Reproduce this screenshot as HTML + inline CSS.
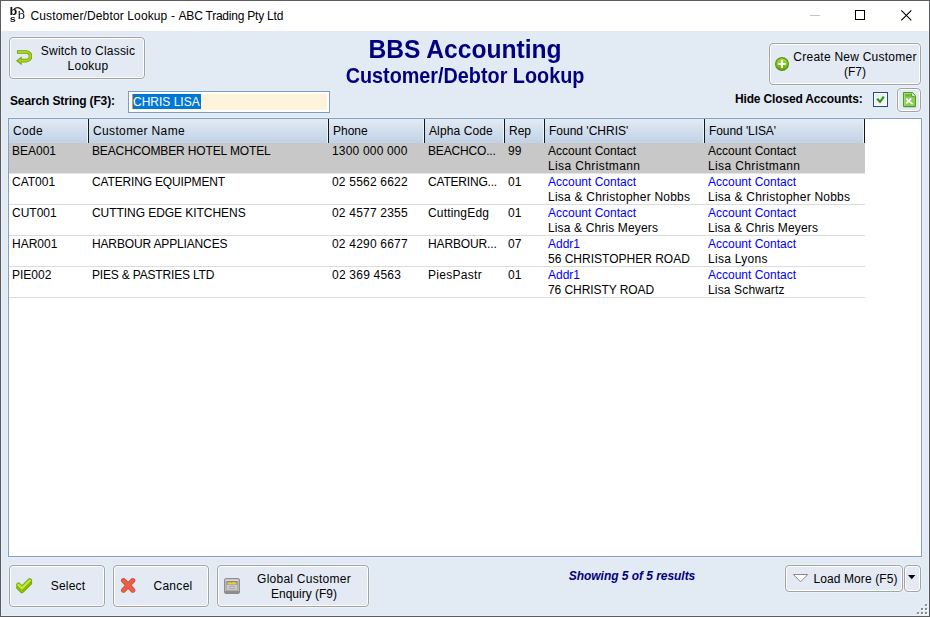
<!DOCTYPE html>
<html><head><meta charset="utf-8"><title>Customer/Debtor Lookup - ABC Trading Pty Ltd</title>
<style>
html,body{margin:0;padding:0;}
body{width:930px;height:617px;overflow:hidden;background:#e2eaf4;font-family:"Liberation Sans",sans-serif;font-size:12px;color:#000;position:relative;}
.abs{position:absolute;}
#win{position:absolute;left:0;top:0;width:928px;height:615px;border:1px solid #5a5c60;border-top-color:#5e5e5e;background:#e2eaf4;box-shadow:inset 0 0 0 1px #e9f0fa;}
#titlebar{position:absolute;left:1px;top:1px;width:928px;height:30px;background:#fff;}
#title{position:absolute;left:30.5px;top:9px;font-size:12px;white-space:nowrap;color:#000;}
.btn{position:absolute;box-sizing:border-box;border:1px solid #a3a3a3;border-radius:4px;background:#e3eaf4;box-shadow:inset 0 0 0 1px #fff,0 0 0 1px rgba(240,246,253,.6);text-align:center;font-size:12px;line-height:15px;color:#000;}
h1,h2{margin:0;position:absolute;left:0;width:930px;text-align:center;color:#000080;font-weight:bold;white-space:nowrap;}
h1{top:35px;font-size:25px;line-height:28px;transform:scaleX(.984);}
h2{top:65px;font-size:21.5px;line-height:22px;transform:scaleX(.921);}
#grid{position:absolute;left:8px;top:118px;width:912px;height:437px;border:1px solid #83a1c1;background:#fff;box-sizing:content-box;box-shadow:0 0 0 1px #e8eff7;}
.hd{position:absolute;top:0;height:24px;box-sizing:border-box;border-right:1px solid #101820;background:linear-gradient(#e3eaf4,#c1d2e6);box-shadow:inset -1px 0 0 #eef3f9;font-size:12px;line-height:24px;padding-left:4px;white-space:nowrap;}
.row{position:absolute;left:0;width:856px;height:31px;border-bottom:1px solid #dcdcdc;box-sizing:border-box;}
.row.sel{background:#c8c8c8;border-bottom-color:#e4e4e4;}
.c{position:absolute;top:1px;font-size:12px;line-height:15px;white-space:nowrap;}
.lnk{color:#0000ff;}
</style></head><body>
<div id="win"></div>
<div id="titlebar"></div>
<div id="title"><span style="letter-spacing:0.13px">Customer/Debtor Lookup</span><span style="letter-spacing:0.15px"> - </span><span style="letter-spacing:-0.22px">ABC Trading Pty Ltd</span></div>

<h1>BBS Accounting</h1>
<h2>Customer/Debtor Lookup</h2>

<div class="btn" style="left:9px;top:37px;width:136px;height:42px;padding:6px 0 0 22px;"><span style="letter-spacing:0.22px">Switch to Classic</span><br><span style="letter-spacing:0.25px">Lookup</span></div>
<div class="btn" style="left:769px;top:43px;width:152px;height:42px;padding:6px 0 0 20px;"><span style="letter-spacing:0.24px">Create New Customer</span><br>(F7)</div>

<div class="abs" style="left:10px;top:94px;font-weight:bold;font-size:12px;letter-spacing:-0.13px;">Search String (F3):</div>
<div class="abs" style="left:128px;top:91px;width:200px;height:20px;border:1px solid #7f9dbe;background:#fff;"><div class="abs" style="left:3px;top:2px;width:195px;height:16px;background:#fff3dc;"></div><span style="position:absolute;left:3px;top:2px;height:15px;border-left:1px solid #ff8a2a;padding-right:1px;background:#0078d7;color:#fff;font-size:12px;line-height:16px;white-space:nowrap;">CHRIS LISA</span></div>
<div class="abs" style="left:735px;top:92px;font-weight:bold;font-size:12px;letter-spacing:-0.16px;">Hide Closed Accounts:</div>

<div id="grid">
<div class="hd" style="left:0px;width:80px;"><span style="letter-spacing:0.33px">Code</span></div>
<div class="hd" style="left:80px;width:240px;"><span style="letter-spacing:0.36px">Customer Name</span></div>
<div class="hd" style="left:320px;width:96px;">Phone</div>
<div class="hd" style="left:416px;width:80px;"><span style="letter-spacing:0.11px">Alpha Code</span></div>
<div class="hd" style="left:496px;width:40px;">Rep</div>
<div class="hd" style="left:536px;width:160px;">Found 'CHRIS'</div>
<div class="hd" style="left:696px;width:160px;"><span style="letter-spacing:-0.08px">Found 'LISA'</span></div>
<div class="row sel" style="top:24px;">
<div class="c" style="left:3px;">BEA001</div>
<div class="c" style="left:83px;"><span style="letter-spacing:-0.13px">BEACHCOMBER HOTEL MOTEL</span></div>
<div class="c" style="left:323px;"><span style="letter-spacing:0.18px">1300 000 000</span></div>
<div class="c" style="left:419px;"><span style="letter-spacing:-0.17px">BEACHCO...</span></div>
<div class="c" style="left:499px;">99</div>
<div class="c" style="left:539px;"><span class="">Account Contact</span><br><span style="letter-spacing:0.38px">Lisa Christmann</span></div>
<div class="c" style="left:699px;"><span class="">Account Contact</span><br><span style="letter-spacing:0.38px">Lisa Christmann</span></div>
</div>
<div class="row" style="top:55px;">
<div class="c" style="left:3px;">CAT001</div>
<div class="c" style="left:83px;"><span style="letter-spacing:-0.16px">CATERING EQUIPMENT</span></div>
<div class="c" style="left:323px;"><span style="letter-spacing:0.20px">02 5562 6622</span></div>
<div class="c" style="left:419px;"><span style="letter-spacing:-0.20px">CATERING...</span></div>
<div class="c" style="left:499px;">01</div>
<div class="c" style="left:539px;"><span class="lnk">Account Contact</span><br><span style="letter-spacing:0.23px">Lisa &amp; Christopher Nobbs</span></div>
<div class="c" style="left:699px;"><span class="lnk">Account Contact</span><br><span style="letter-spacing:0.23px">Lisa &amp; Christopher Nobbs</span></div>
</div>
<div class="row" style="top:86px;">
<div class="c" style="left:3px;">CUT001</div>
<div class="c" style="left:83px;"><span style="letter-spacing:-0.05px">CUTTING EDGE KITCHENS</span></div>
<div class="c" style="left:323px;"><span style="letter-spacing:0.20px">02 4577 2355</span></div>
<div class="c" style="left:419px;"><span style="letter-spacing:0.17px">CuttingEdg</span></div>
<div class="c" style="left:499px;">01</div>
<div class="c" style="left:539px;"><span class="lnk">Account Contact</span><br><span style="letter-spacing:0.14px">Lisa &amp; Chris Meyers</span></div>
<div class="c" style="left:699px;"><span class="lnk">Account Contact</span><br><span style="letter-spacing:0.14px">Lisa &amp; Chris Meyers</span></div>
</div>
<div class="row" style="top:117px;">
<div class="c" style="left:3px;">HAR001</div>
<div class="c" style="left:83px;"><span style="letter-spacing:-0.15px">HARBOUR APPLIANCES</span></div>
<div class="c" style="left:323px;"><span style="letter-spacing:0.20px">02 4290 6677</span></div>
<div class="c" style="left:419px;"><span style="letter-spacing:-0.13px">HARBOUR...</span></div>
<div class="c" style="left:499px;">07</div>
<div class="c" style="left:539px;"><span class="lnk">Addr1</span><br>56 CHRISTOPHER ROAD</div>
<div class="c" style="left:699px;"><span class="lnk">Account Contact</span><br><span style="letter-spacing:0.28px">Lisa Lyons</span></div>
</div>
<div class="row" style="top:148px;">
<div class="c" style="left:3px;">PIE002</div>
<div class="c" style="left:83px;"><span style="letter-spacing:-0.18px">PIES &amp; PASTRIES LTD</span></div>
<div class="c" style="left:323px;"><span style="letter-spacing:0.22px">02 369 4563</span></div>
<div class="c" style="left:419px;"><span style="letter-spacing:0.30px">PiesPastr</span></div>
<div class="c" style="left:499px;">01</div>
<div class="c" style="left:539px;"><span class="lnk">Addr1</span><br><span style="letter-spacing:-0.07px">76 CHRISTY ROAD</span></div>
<div class="c" style="left:699px;"><span class="lnk">Account Contact</span><br><span style="letter-spacing:0.15px">Lisa Schwartz</span></div>
</div>
</div>

<div class="btn" style="left:9px;top:565px;width:96px;height:42px;line-height:40px;padding-left:22px;letter-spacing:0.2px;">Select</div>
<div class="btn" style="left:113px;top:565px;width:96px;height:42px;line-height:40px;padding-left:24px;letter-spacing:0.3px;">Cancel</div>
<div class="btn" style="left:217px;top:565px;width:152px;height:42px;padding:6px 0 0 22px;"><span style="letter-spacing:0.26px">Global Customer</span><br>Enquiry (F9)</div>
<div class="abs" style="left:532px;top:569px;width:200px;text-align:center;font-weight:bold;font-style:italic;color:#000080;font-size:12px;letter-spacing:-0.04px;">Showing 5 of 5 results</div>
<div class="btn" style="left:785px;top:565px;width:118px;height:27px;line-height:25px;padding:1px 0 0 23px;letter-spacing:0.1px;">Load More (F5)</div>
<div class="btn" style="left:904px;top:565px;width:17px;height:27px;"></div>

<svg class="abs" style="left:0;top:0;filter:grayscale(1);" width="32" height="28" viewBox="0 0 32 28">
<g font-family="Liberation Mono, monospace" fill="#151515">
<text transform="translate(9.4,14.7) scale(1.28,1)" font-weight="bold" font-size="10.2">b</text>
<text transform="translate(9.6,21.8) scale(1.2,1)" font-weight="bold" font-size="9">s</text>
<text transform="translate(17.6,18.8) scale(1.28,1)" font-size="10.2">b</text>
</g>
<path d="M14.2,9 C16.6,6.6 21.4,7.2 23.9,12.7" fill="none" stroke="#222" stroke-width="1.2"/>
</svg>
<svg class="abs" style="left:805px;top:5px;" width="115" height="22" viewBox="0 0 115 22">
<rect x="5" y="10" width="10" height="1" fill="#c4c4c4"/>
<rect x="50.5" y="5.5" width="9" height="9" fill="none" stroke="#000" stroke-width="1"/>
<path d="M96.3,5.3 L106.3,15.3 M106.3,5.3 L96.3,15.3" stroke="#000" stroke-width="1.1" fill="none"/>
</svg>
<svg class="abs" style="left:16px;top:50px;" width="16" height="16" viewBox="0 0 16 16">
<path d="M1,2 H10.2 A4.3,4.3 0 0 1 10.2,10.6 H5" fill="none" stroke="#6f9e06" stroke-width="3.6"/>
<path d="M0,10.8 L5.6,6.4 V15.2 Z" fill="#6f9e06"/>
<path d="M1.8,2 H10.2 A4.3,4.3 0 0 1 10.2,10.6 H4" fill="none" stroke="#a8d616" stroke-width="2.1"/>
<path d="M1.4,10.8 L4.8,8.2 V13.4 Z" fill="#a6d312"/>
</svg>
<svg class="abs" style="left:775px;top:57px;" width="14" height="14" viewBox="0 0 14 14">
<defs><linearGradient id="gp" x1="0" y1="0" x2="0" y2="1"><stop offset="0" stop-color="#aadc48"/><stop offset="1" stop-color="#62a408"/></linearGradient></defs>
<circle cx="7" cy="7" r="6.4" fill="url(#gp)" stroke="#559c06" stroke-width="1.2"/>
<path d="M7,3.2 V10.8 M3.2,7 H10.8" stroke="#fff" stroke-width="2.1" fill="none"/>
</svg>
<div class="abs" style="left:873px;top:92px;width:13px;height:13px;border:1px solid #1e4a87;background:linear-gradient(135deg,#e8e8e8,#fafafa);box-shadow:inset 0 0 0 1px #fff;"></div>
<svg class="abs" style="left:873px;top:92px;" width="15" height="15" viewBox="0 0 15 15">
<path d="M4.2,6.8 L7,9.8 L10.8,4.6" fill="none" stroke="#1a9e1a" stroke-width="2.2"/>
</svg>
<div class="btn" style="left:897px;top:88px;width:24px;height:24px;"></div>
<svg class="abs" style="left:903px;top:92px;" width="14" height="16" viewBox="0 0 14 16">
<rect x="0.6" y="14.6" width="12.2" height="1" fill="#9a9a9a" opacity=".6"/>
<path d="M0.5,0.5 H9.4 L12.5,3.6 V14.5 H0.5 Z" fill="#8ccc58" stroke="#4f9c1c" stroke-width="1"/>
<path d="M1.5,14 V1.5 H9" fill="none" stroke="#a4dc74" stroke-width="1"/>
<rect x="2.2" y="2.2" width="5.6" height="2.4" fill="#70b03a"/>
<path d="M8.6,0.6 L12.4,4.4 H8.6 Z" fill="#fff"/><path d="M8.7,1.2 V4.3 H11.8" fill="none" stroke="#3f8c12" stroke-width="0.9"/>
<path d="M3.3,6.6 L8.6,11.4 M8.3,6.3 L3.2,11.4" stroke="#fff" stroke-width="1.7" fill="none"/>
<path d="M8,11.6 H10" stroke="#fff" stroke-width="1.2"/>
</svg>
<svg class="abs" style="left:16px;top:578px;" width="17" height="17" viewBox="0 0 17 17">
<g fill="none" stroke-linecap="round" stroke-linejoin="round">
<path d="M2.5,9.4 L5.9,12.9 L13.8,5" stroke="#78a800" stroke-width="4.6"/>
<path d="M2.5,9.4 L5.9,12.9 L13.8,5" stroke="#9ccc10" stroke-width="2.4"/>
<path d="M2.5,6.8 L5.9,10.3 L13.8,2.5" stroke="#7eb000" stroke-width="4.6"/>
<path d="M2.5,6.8 L5.9,10.3 L13.8,2.5" stroke="#c6e640" stroke-width="2.4"/>
</g>
</svg>
<svg class="abs" style="left:120px;top:577px;" width="17" height="17" viewBox="0 0 17 17">
<path d="M3.5,3.6 L12.8,13.2 M12.8,3.6 L3.5,13.2" stroke="#cf4a36" stroke-width="5" stroke-linecap="round" fill="none"/>
<path d="M3.5,3.6 L12.8,13.2 M12.8,3.6 L3.5,13.2" stroke="#ee5e48" stroke-width="3.4" stroke-linecap="round" fill="none"/>
</svg>
<svg class="abs" style="left:224px;top:578px;" width="16" height="16" viewBox="0 0 16 16">
<rect x="0.5" y="0.5" width="15" height="15" rx="1.5" fill="#b8b8b8" stroke="#8e8e8e"/>
<rect x="1.5" y="1.5" width="13" height="1.5" fill="#d6d6d6"/>
<rect x="2.5" y="3" width="11" height="4" fill="#8a8a8a"/>
<path d="M3.6,6.6 V4.2 H6.4 L7.2,5 L8,4.2 H11.6 L12.4,5 V6.6 Z" fill="#f2d21e"/>
<rect x="2.5" y="6.6" width="11" height="5.6" fill="#c9c9c9" stroke="#a2a2a2" stroke-width="0.6"/>
<rect x="6" y="8.4" width="4" height="2.2" fill="#d8d8d8" stroke="#9a9a9a" stroke-width="0.7"/>
<rect x="1" y="13" width="14" height="2.4" fill="#8c8c8c"/>
</svg>
<svg class="abs" style="left:792px;top:573px;" width="18" height="11" viewBox="0 0 18 11">
<path d="M1.4,1.5 H15.8 L8.6,8.8 Z" fill="#fff" stroke="#8a8a8a" stroke-width="1"/>
</svg>
<svg class="abs" style="left:908px;top:575px;" width="8" height="5" viewBox="0 0 8 5"><path d="M0,0 H7.4 L3.7,4.2 Z" fill="#000"/></svg>
<svg class="abs" style="left:916px;top:602px;" width="13" height="13" viewBox="0 0 13 13"><rect x="10" y="3" width="2" height="2" fill="#fff"/><rect x="6" y="7" width="2" height="2" fill="#fff"/><rect x="10" y="7" width="2" height="2" fill="#fff"/><rect x="2" y="11" width="2" height="2" fill="#fff"/><rect x="6" y="11" width="2" height="2" fill="#fff"/><rect x="10" y="11" width="2" height="2" fill="#fff"/><rect x="9" y="2" width="2" height="2" fill="#8c8c8c"/><rect x="5" y="6" width="2" height="2" fill="#8c8c8c"/><rect x="9" y="6" width="2" height="2" fill="#8c8c8c"/><rect x="1" y="10" width="2" height="2" fill="#8c8c8c"/><rect x="5" y="10" width="2" height="2" fill="#8c8c8c"/><rect x="9" y="10" width="2" height="2" fill="#8c8c8c"/></svg>
</body></html>
